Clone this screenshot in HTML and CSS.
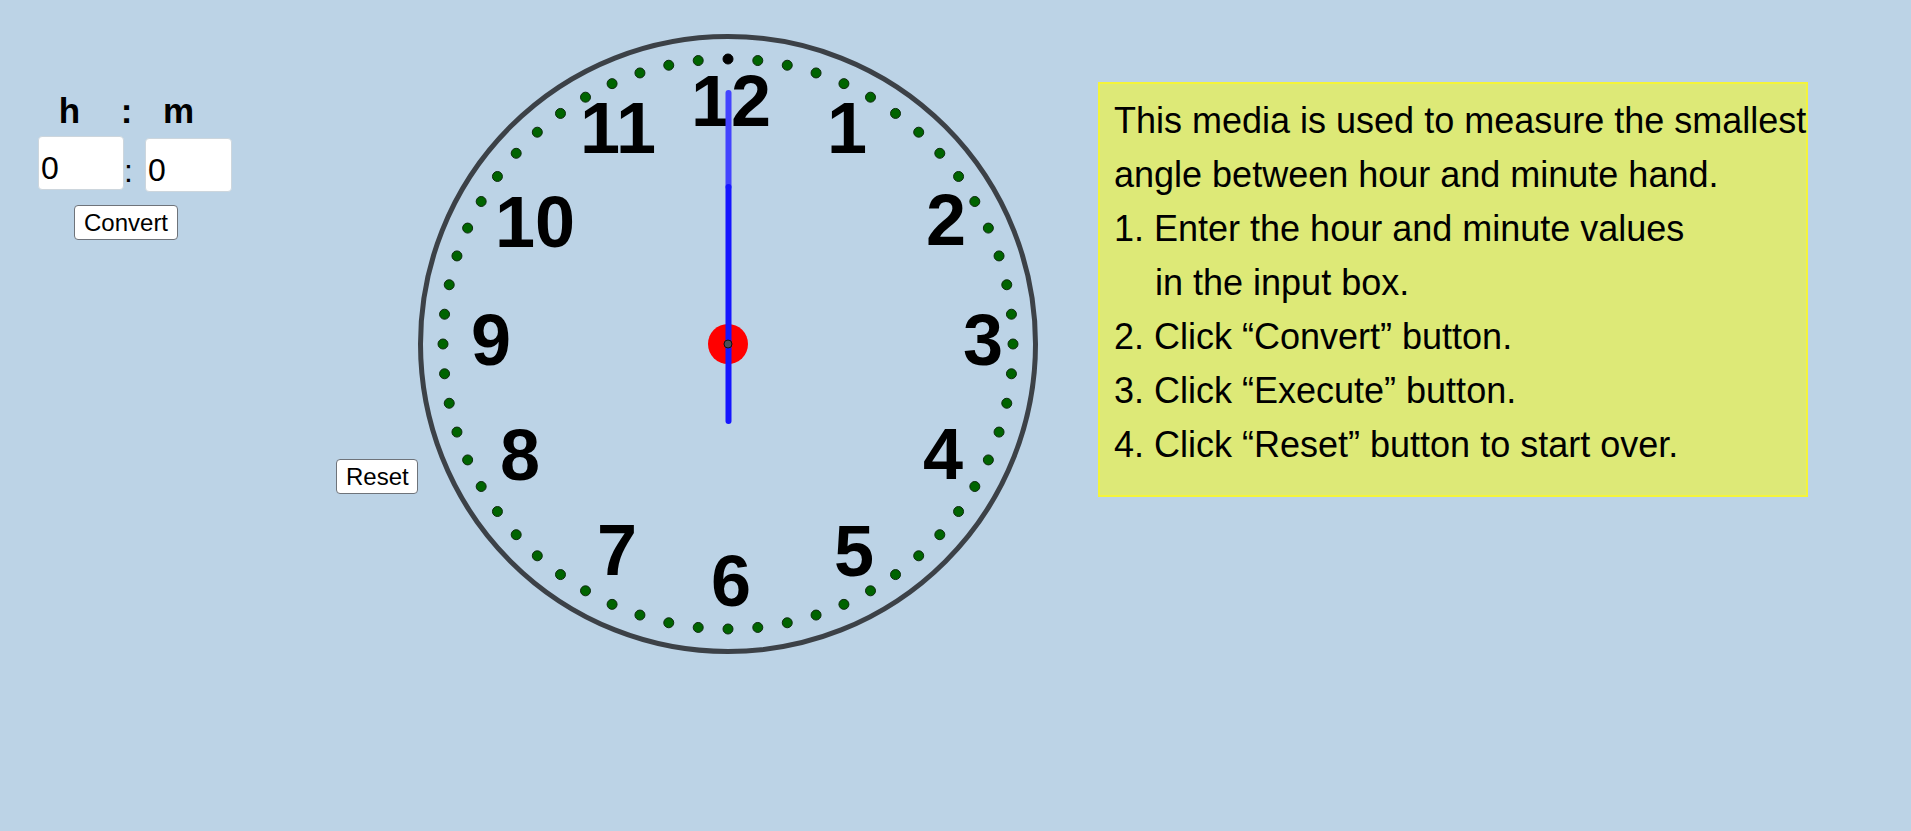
FILE: index.html
```html
<!DOCTYPE html>
<html lang="en">
<head>
<meta charset="utf-8">
<title>Clock angle</title>
<link rel="stylesheet" href="styles.css">
</head>
<body>
<div class="app">
  <div class="controls">
    <div class="labels">
      <span class="lab lab-h">h</span>
      <span class="lab lab-c">:</span>
      <span class="lab lab-m">m</span>
    </div>
    <div class="inputs">
      <input class="box box-h" type="text" value="0">
      <span class="sep">:</span>
      <input class="box box-m" type="text" value="0">
    </div>
    <button class="btn btn-convert">Convert</button>
  </div>
  <button class="btn btn-reset">Reset</button>
  <svg class="clock" width="600" height="600" viewBox="-300 -300 600 600" xmlns="http://www.w3.org/2000/svg">
    <circle class="ring" cx="0" cy="0" r="307.5"/>
    <g id="dots"></g>
    <g class="nums">
      <text x="3" y="-218">12</text>
      <text x="119" y="-191">1</text>
      <text x="218" y="-99">2</text>
      <text x="255" y="21">3</text>
      <text x="215" y="135">4</text>
      <text x="126" y="232">5</text>
      <text x="3" y="262">6</text>
      <text x="-111" y="231">7</text>
      <text x="-208" y="136">8</text>
      <text x="-237" y="21">9</text>
      <text x="-193" y="-97">10</text>
      <text x="-110" y="-191">11</text>
    </g>
    <circle class="pivot" cx="0" cy="0" r="20"/>
    <line class="hand-min" x1="0.5" y1="-251" x2="0.5" y2="-157"/>
    <line class="hand-hr" x1="0.5" y1="-157" x2="0.5" y2="77"/>
    <circle class="center" cx="0" cy="0" r="4"/>
  </svg>
  <div class="note">
    <div class="line">This media is used to measure the smallest</div>
    <div class="line">angle between hour and minute hand.</div>
    <div class="line">1. Enter the hour and minute values</div>
    <div class="line indent">in the input box.</div>
    <div class="line">2. Click “Convert” button.</div>
    <div class="line">3. Click “Execute” button.</div>
    <div class="line">4. Click “Reset” button to start over.</div>
  </div>
</div>
<script src="script.js"></script>
</body>
</html>
```
FILE: script.js
```js
(function () {
  var g = document.getElementById('dots');
  var ns = 'http://www.w3.org/2000/svg';
  for (var i = 0; i < 60; i++) {
    var a = i * Math.PI / 30;
    var c = document.createElementNS(ns, 'circle');
    c.setAttribute('cx', (285 * Math.sin(a)).toFixed(2));
    c.setAttribute('cy', (-285 * Math.cos(a)).toFixed(2));
    c.setAttribute('r', '5');
    c.setAttribute('class', i === 0 ? 'dot dot-top' : 'dot');
    g.appendChild(c);
  }
})();
```
FILE: styles.css
```css
html, body {
  margin: 0;
  padding: 0;
}
body {
  background: #bcd3e6;
  width: 1911px;
  height: 831px;
  overflow: hidden;
  font-family: "Liberation Sans", Arial, sans-serif;
  color: #000;
}
.app {
  display: flex;
  align-items: flex-start;
}
.controls {
  margin-left: 38px;
  width: 194px;
  display: flex;
  flex-direction: column;
  align-items: flex-start;
}
.labels {
  margin-top: 91px;
  display: flex;
  height: 40px;
  line-height: 40px;
  font-size: 35px;
  font-weight: bold;
}
.lab {
  display: block;
  text-align: center;
}
.lab-h { width: 63px; }
.lab-c { width: 51px; }
.lab-m { width: 53px; }
.inputs {
  margin-top: 5px;
  display: flex;
  align-items: flex-start;
}
.box {
  box-sizing: border-box;
  width: 86px;
  height: 54px;
  margin: 0;
  padding: 10px 0 0 2px;
  border: 1px solid #cdd6dd;
  border-radius: 4px;
  background: #fff;
  font-family: "Liberation Sans", Arial, sans-serif;
  font-size: 32px;
  line-height: 40px;
  color: #000;
  outline: none;
}
.box-m {
  width: 87px;
  margin-top: 2px;
}
.sep {
  font-size: 32px;
  line-height: 32px;
  margin-top: 19px;
  width: 21px;
}
.btn {
  box-sizing: border-box;
  height: 35px;
  margin: 0;
  padding: 0 9px;
  border: 1px solid #6e737a;
  border-radius: 4px;
  background: #fff;
  font-family: "Liberation Sans", Arial, sans-serif;
  font-size: 24px;
  line-height: 33px;
  color: #000;
}
.btn-convert {
  margin-top: 13px;
  margin-left: 36px;
  width: 104px;
}
.btn-reset {
  margin-left: 104px;
  margin-top: 459px;
  width: 82px;
}
.clock {
  display: block;
  margin-left: 10px;
  margin-top: 44px;
  overflow: visible;
  flex: none;
}
.ring {
  fill: none;
  stroke: #3c4147;
  stroke-width: 5;
}
.dot {
  fill: #006400;
  stroke: #0d2b0d;
  stroke-width: 1;
}
.dot-top {
  fill: #000;
  stroke: #000;
}
.nums text {
  font-family: "Liberation Sans", Arial, sans-serif;
  font-weight: bold;
  font-size: 72px;
  text-anchor: middle;
  fill: #000;
}
.pivot {
  fill: #ff0000;
}
.hand-min {
  stroke: #4343ff;
  stroke-width: 6;
  stroke-linecap: round;
}
.hand-hr {
  stroke: #1515ff;
  stroke-width: 6;
  stroke-linecap: round;
}
.center {
  fill: #4a4f57;
  stroke: #111;
  stroke-width: 1;
}
.note {
  box-sizing: border-box;
  margin-left: 70px;
  margin-top: 82px;
  width: 710px;
  height: 415px;
  padding: 10px 0 0 14px;
  background: #dde977;
  border: 2px solid #f4f43a;
  font-size: 36px;
  line-height: 54px;
  white-space: nowrap;
}
.indent {
  padding-left: 41px;
}
```
